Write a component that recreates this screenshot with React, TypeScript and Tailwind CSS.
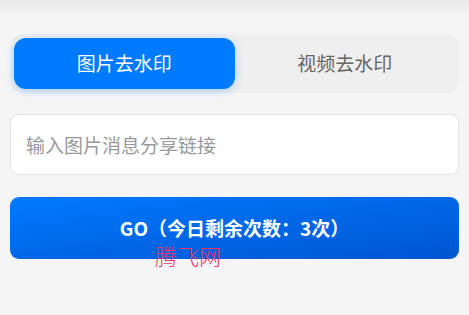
import { useState } from "react";

const CJK = '"Noto Sans CJK SC", "Noto Sans", sans-serif';

export default function App() {
  const [tab, setTab] = useState<"image" | "video">("image");
  const [link, setLink] = useState("");

  return (
    <div className="relative min-h-[315px] bg-[#f5f5f5]" style={{ fontFamily: CJK }}>
      <div className="h-4 bg-gradient-to-b from-[#e9e9e9] to-[#f5f5f5]" />

      <div className="px-[10px] pt-[18px]">
        <div className="flex rounded-[14px] bg-[#efefef] p-1">
          <button
            onClick={() => setTab("image")}
            className={`flex h-[51px] flex-1 items-center justify-center rounded-[12px] text-[19px] ${
              tab === "image"
                ? "bg-[#007aff] text-white shadow-[0_2px_8px_rgba(0,122,255,0.3)]"
                : "text-[#666666]"
            }`}
          >
            图片去水印
          </button>
          <button
            onClick={() => setTab("video")}
            className={`flex h-[51px] flex-1 items-center justify-center rounded-[12px] text-[19px] ${
              tab === "video"
                ? "bg-[#007aff] text-white shadow-[0_2px_8px_rgba(0,122,255,0.3)]"
                : "text-[#666666]"
            }`}
          >
            视频去水印
          </button>
        </div>

        <input
          value={link}
          onChange={(e) => setLink(e.target.value)}
          placeholder={tab === "image" ? "输入图片消息分享链接" : "输入视频消息分享链接"}
          className="mt-[21px] h-[61px] w-full rounded-[9px] border border-[#e3e3e3] bg-white px-[15px] text-[19px] text-[#333333] outline-none placeholder:text-[#999999]"
        />

        <button className="mt-[22px] flex h-[62px] w-full items-center justify-center rounded-[9px] bg-gradient-to-br from-[#007aff] to-[#0055d0] text-[19px] font-bold text-white">
          GO（今日剩余次数：3次）
        </button>
      </div>

      <div
        className="absolute left-[155px] top-[244px] text-[22px] leading-none text-[#e8336a]"
        style={{ fontFamily: '"Noto Sans CJK SC", sans-serif', fontWeight: 300 }}
      >
        腾飞网
      </div>
    </div>
  );
}
